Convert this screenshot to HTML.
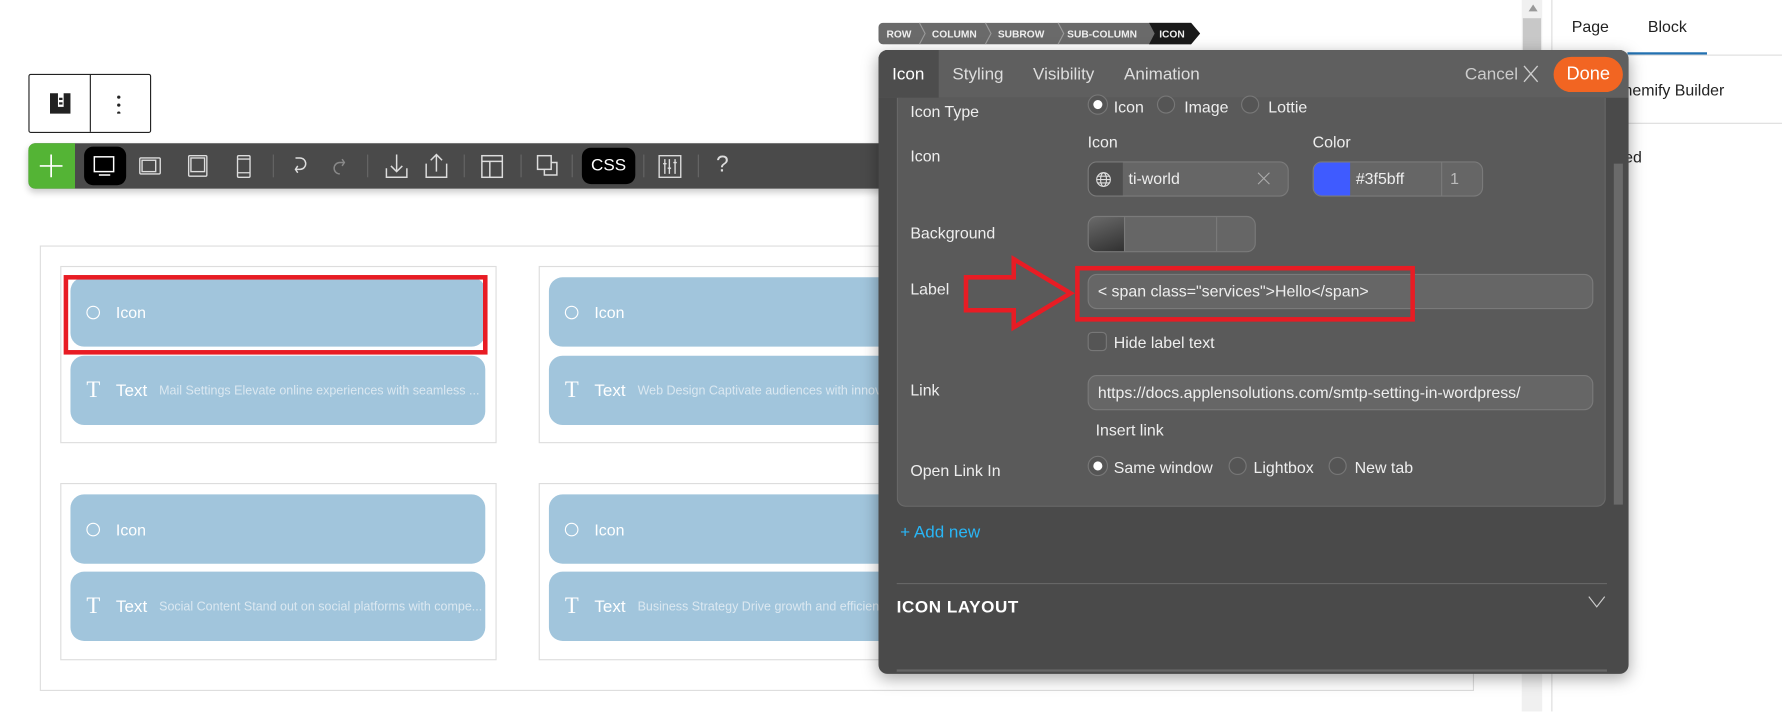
<!DOCTYPE html>
<html><head><meta charset="utf-8"><style>
*{box-sizing:border-box;margin:0;padding:0}
html,body{width:1782px;height:712px;overflow:hidden;background:#fff;font-family:"Liberation Sans",Arial,sans-serif}
#w{position:absolute;left:0;top:0;width:1568px;height:626px;transform:scale(1.13648);transform-origin:0 0}
.a{position:absolute}
.t{color:#eee;font-size:14px;white-space:nowrap}
.blk{position:absolute;background:#a1c5dc;border-radius:12px;color:#fff;font-size:14px}
.blk span{position:absolute;top:50%;transform:translateY(-50%);white-space:nowrap}
.radio{position:absolute;width:16px;height:16px;border-radius:50%;border:1px solid #777;background:#555}
.radio.on{background:#fff;border:4px solid #555;box-shadow:0 0 0 1px #777}
.inp{position:absolute;border:1px solid #7a7a7a;border-radius:8px;background:#666}
.sep{position:absolute;top:136px;width:1px;height:20px;background:#666}
</style></head><body><div id="w">

<div class="a" style="left:25px;top:65px;width:108px;height:52px;border:1px solid #222;border-radius:2px"></div>
<div class="a" style="left:79px;top:66px;width:1px;height:50px;background:#222"></div>
<svg class="a" style="left:43px;top:81px" width="20" height="20" viewBox="0 0 20 20"><path d="M1 1h7v12h5V1h6v18H1z" fill="#222"/><rect x="9" y="5" width="3" height="2" fill="#222"/><rect x="9" y="9" width="3" height="2" fill="#222"/></svg>
<div class="a" style="left:103px;top:82px;width:3px;height:18px;background:radial-gradient(circle,#222 1.3px,transparent 1.6px) 0 0/3px 7px"></div>

<div class="a" style="left:25px;top:126px;width:780px;height:40px;background:#4a4a4a;border-radius:6px 0 0 6px;box-shadow:0 3px 6px rgba(0,0,0,.2)"></div>
<div class="a" style="left:25px;top:126px;width:41px;height:40px;background:#54b435;border-radius:6px 0 0 6px"></div>
<svg class="a" style="left:34px;top:135px" width="22" height="22"><path d="M11 1v20M1 11h20" stroke="#fff" stroke-width="1.5"/></svg>
<div class="a" style="left:74px;top:129px;width:37px;height:34px;background:#000;border-radius:8px"></div>
<svg class="a" style="left:80px;top:134px" width="24" height="24" fill="none" stroke="#fff" stroke-width="1.3"><rect x="3" y="4" width="17" height="13"/><path d="M7 20h10"/></svg>
<svg class="a" style="left:120px;top:134px" width="24" height="24" fill="none" stroke="#ddd" stroke-width="1.2"><rect x="3" y="5" width="18" height="14" rx="1"/><rect x="5" y="7" width="12" height="10"/></svg>
<svg class="a" style="left:162px;top:134px" width="24" height="24" fill="none" stroke="#ddd" stroke-width="1.2"><rect x="4" y="3" width="16" height="18" rx="1"/><rect x="6" y="5" width="12" height="12"/></svg>
<svg class="a" style="left:202px;top:134px" width="24" height="24" fill="none" stroke="#ddd" stroke-width="1.2"><rect x="7" y="3" width="11" height="19" rx="1"/><path d="M7 6h11M7 18h11"/></svg>
<div class="sep" style="left:240px"></div>
<svg class="a" style="left:252px;top:134px" width="24" height="24" fill="none" stroke="#ddd" stroke-width="1.3"><path d="M8 5h4a5 5 0 0 1 0 10H8M10 12l-2 3 2 3"/></svg>
<svg class="a" style="left:287px;top:134px" width="24" height="24" fill="none" stroke="#888" stroke-width="1.3"><path d="M16 9h-4a5 5 0 0 0 0 10M14 6l2 3-2 3"/></svg>
<div class="sep" style="left:323px"></div>
<svg class="a" style="left:337px;top:133px" width="24" height="26" fill="none" stroke="#ddd" stroke-width="1.3"><path d="M12 3v15M7 13l5 5 5-5M3 15v8h18v-8"/></svg>
<svg class="a" style="left:372px;top:133px" width="24" height="26" fill="none" stroke="#ddd" stroke-width="1.3"><path d="M12 18V3M7 8l5-5 5 5M3 11v12h18V11"/></svg>
<div class="sep" style="left:408px"></div>
<svg class="a" style="left:421px;top:134px" width="24" height="24" fill="none" stroke="#ddd" stroke-width="1.3"><rect x="3" y="3" width="18" height="19"/><path d="M3 8h18M10 8v14"/></svg>
<div class="sep" style="left:458px"></div>
<svg class="a" style="left:470px;top:134px" width="24" height="24" fill="none" stroke="#ddd" stroke-width="1.3"><rect x="3" y="3" width="12" height="12"/><path d="M15 9h5v11H9v-5"/></svg>
<div class="sep" style="left:503px"></div>
<div class="a" style="left:512px;top:130px;width:47px;height:32px;background:#000;border-radius:8px;color:#fff;font-size:15px;text-align:center;line-height:32px">CSS</div>
<div class="sep" style="left:566px"></div>
<svg class="a" style="left:577px;top:134px" width="24" height="24" fill="none" stroke="#ddd" stroke-width="1.2"><rect x="3" y="3" width="19" height="19"/><path d="M8 6v13M12 6v13M17 6v13M6.5 10h3M10.5 14h3M15.5 9h3"/></svg>
<div class="sep" style="left:614px"></div>
<div class="a" style="left:630px;top:134px;color:#ddd;font-size:20px">?</div>

<div class="a" style="left:35px;top:216px;width:1262px;height:392px;border:1px solid #ddd"></div>
<div class="a" style="left:53px;top:234px;width:384px;height:156px;border:1px solid #ddd"></div>
<div class="a" style="left:474px;top:234px;width:384px;height:156px;border:1px solid #ddd"></div>
<div class="a" style="left:53px;top:425px;width:384px;height:156px;border:1px solid #ddd"></div>
<div class="a" style="left:474px;top:425px;width:384px;height:156px;border:1px solid #ddd"></div>

<div class="blk" style="left:62px;top:244px;width:365px;height:61px"><span style="left:14px;width:12px;height:12px;border:1.3px solid #fff;border-radius:50%"></span><span style="left:40px">Icon</span></div>
<div class="blk" style="left:62px;top:313px;width:365px;height:61px"><span style="left:14px;font-family:'Liberation Serif',serif;font-size:20px">T</span><span style="left:40px;font-size:15px">Text</span><span style="left:78px;font-size:11px;color:#dbe8f1">Mail Settings Elevate online experiences with seamless ...</span></div>
<div class="blk" style="left:483px;top:244px;width:365px;height:61px"><span style="left:14px;width:12px;height:12px;border:1.3px solid #fff;border-radius:50%"></span><span style="left:40px">Icon</span></div>
<div class="blk" style="left:483px;top:313px;width:365px;height:61px"><span style="left:14px;font-family:'Liberation Serif',serif;font-size:20px">T</span><span style="left:40px;font-size:15px">Text</span><span style="left:78px;font-size:11px;color:#dbe8f1">Web Design Captivate audiences with innovative</span></div>
<div class="blk" style="left:62px;top:435px;width:365px;height:61px"><span style="left:14px;width:12px;height:12px;border:1.3px solid #fff;border-radius:50%"></span><span style="left:40px">Icon</span></div>
<div class="blk" style="left:62px;top:503px;width:365px;height:61px"><span style="left:14px;font-family:'Liberation Serif',serif;font-size:20px">T</span><span style="left:40px;font-size:15px">Text</span><span style="left:78px;font-size:11px;color:#dbe8f1">Social Content Stand out on social platforms with compe...</span></div>
<div class="blk" style="left:483px;top:435px;width:365px;height:61px"><span style="left:14px;width:12px;height:12px;border:1.3px solid #fff;border-radius:50%"></span><span style="left:40px">Icon</span></div>
<div class="blk" style="left:483px;top:503px;width:365px;height:61px"><span style="left:14px;font-family:'Liberation Serif',serif;font-size:20px">T</span><span style="left:40px;font-size:15px">Text</span><span style="left:78px;font-size:11px;color:#dbe8f1">Business Strategy Drive growth and efficiency</span></div>
<div class="a" style="left:56px;top:242px;width:373px;height:70px;border:4px solid #e81c24"></div>

<div class="a" style="left:1339px;top:0;width:18px;height:626px;background:#f0f0f0"></div>
<div class="a" style="left:1340px;top:16px;width:16px;height:400px;background:#c8c8c8"></div>
<div class="a" style="left:1345px;top:4px;width:0;height:0;border:4px solid transparent;border-bottom:6px solid #999;border-top:0"></div>
<div class="a" style="left:1365px;top:0;width:203px;height:626px;border-left:1px solid #ddd;background:#fff"></div>
<div class="a" style="left:1383px;top:15px;font-size:14px;color:#222">Page</div>
<div class="a" style="left:1450px;top:15px;font-size:14px;color:#222">Block</div>
<div class="a" style="left:1366px;top:48px;width:202px;height:1px;background:#ddd"></div>
<div class="a" style="left:1432px;top:46px;width:70px;height:2px;background:#2271b1"></div>
<div class="a" style="left:1420px;top:71px;font-size:14px;color:#222">Themify Builder</div>
<div class="a" style="left:1366px;top:108px;width:202px;height:1px;background:#ddd"></div>
<div class="a" style="left:1405px;top:130px;font-size:14px;color:#222">Saved</div>

<svg class="a" style="left:773px;top:20px" width="285" height="19" font-family="Liberation Sans" font-size="9" font-weight="bold">
<path d="M4 0H275l8 9.5-8 9.5H4a4 4 0 0 1-4-4V4a4 4 0 0 1 4-4z" fill="#6a6a6a"/>
<path d="M238 0H275l8 9.5-8 9.5H238l5-9.5z" fill="#1a1a1a"/>
<path d="M36 0l5 9.5-5 9.5M94 0l5 9.5-5 9.5M158 0l5 9.5-5 9.5" stroke="#999" fill="none"/>
<text x="7" y="13" fill="#eee">ROW</text><text x="47" y="13" fill="#eee">COLUMN</text><text x="105" y="13" fill="#eee">SUBROW</text><text x="166" y="13" fill="#eee">SUB-COLUMN</text><text x="247" y="13" fill="#eee">ICON</text></svg>

<div class="a" style="left:773px;top:44px;width:660px;height:549px;background:#4a4a4a;border-radius:8px;box-shadow:0 4px 14px rgba(0,0,0,.35);overflow:hidden">
 <div class="a" style="left:0;top:0;width:660px;height:42px;background:#5f5f5f"></div>
 <div class="a" style="left:0;top:0;width:53px;height:42px;background:#4d4d4d"></div>
 <div class="a t" style="left:12px;top:13px;font-size:15px;color:#fff">Icon</div>
 <div class="a t" style="left:65px;top:13px;font-size:15px;color:#ddd">Styling</div>
 <div class="a t" style="left:136px;top:13px;font-size:15px;color:#ddd">Visibility</div>
 <div class="a t" style="left:216px;top:13px;font-size:15px;color:#ddd">Animation</div>
 <div class="a t" style="left:516px;top:13px;font-size:15px;color:#ccc">Cancel</div>
 <svg class="a" style="left:566px;top:12px" width="16" height="18"><path d="M2 2l12 14M14 2L2 16" stroke="#ccc" stroke-width="1.2"/></svg>
 <div class="a" style="left:594px;top:6px;width:61px;height:31px;background:#f26522;border-radius:16px;color:#fff;font-size:16px;text-align:center;line-height:31px">Done</div>
 <div class="a" style="left:16px;top:42px;width:624px;height:360px;background:#5a5a5a;border:1px solid #6a6a6a;border-top:0;border-radius:0 0 8px 8px"></div>
 <div class="a" style="left:647px;top:100px;width:8px;height:300px;background:#6a6a6a"></div>
</div>

<div class="a t" style="left:801px;top:90px">Icon Type</div>
<div class="radio on" style="left:958px;top:84px"></div><div class="a t" style="left:980px;top:86px">Icon</div>
<div class="radio" style="left:1018px;top:84px"></div><div class="a t" style="left:1042px;top:86px">Image</div>
<div class="radio" style="left:1092px;top:84px"></div><div class="a t" style="left:1116px;top:86px">Lottie</div>

<div class="a t" style="left:801px;top:129px">Icon</div>
<div class="a t" style="left:957px;top:117px">Icon</div>
<div class="a t" style="left:1155px;top:117px">Color</div>
<div class="inp" style="left:957px;top:142px;width:177px;height:31px;overflow:hidden"><div class="a" style="left:0;top:0;width:30px;height:31px;background:#4e4e4e"></div></div>
<svg class="a" style="left:963px;top:150px" width="16" height="16" fill="none" stroke="#ddd" stroke-width="1"><circle cx="8" cy="8" r="6"/><ellipse cx="8" cy="8" rx="2.6" ry="6"/><path d="M2 8h12M3 5h10M3 11h10"/></svg>
<div class="a t" style="left:993px;top:149px">ti-world</div>
<svg class="a" style="left:1105px;top:150px" width="14" height="14"><path d="M2 2l10 10M12 2L2 12" stroke="#aaa"/></svg>
<div class="inp" style="left:1155px;top:142px;width:150px;height:31px;overflow:hidden"><div class="a" style="left:0;top:0;width:32px;height:31px;background:#3f5bff"></div><div class="a" style="left:112px;top:0;width:1px;height:31px;background:#7a7a7a"></div></div>
<div class="a t" style="left:1193px;top:149px">#3f5bff</div>
<div class="a t" style="left:1276px;top:149px;color:#bbb">1</div>

<div class="a t" style="left:801px;top:197px">Background</div>
<div class="inp" style="left:957px;top:190px;width:148px;height:32px;overflow:hidden"><div class="a" style="left:0;top:0;width:31px;height:32px;background:linear-gradient(160deg,#6a6a6a,#2e2e2e)"></div><div class="a" style="left:31px;top:0;width:1px;height:32px;background:#7a7a7a"></div><div class="a" style="left:112px;top:0;width:1px;height:32px;background:#7a7a7a"></div></div>

<div class="a t" style="left:801px;top:246px">Label</div>
<div class="inp" style="left:957px;top:241px;width:445px;height:31px"></div>
<div class="a t" style="left:966px;top:248px">&lt; span class="services"&gt;Hello&lt;/span&gt;</div>
<div class="a" style="left:946px;top:234px;width:299px;height:49px;border:4px solid #e81c24"></div>
<svg class="a" style="left:845px;top:224px" width="104" height="70"><path d="M5 20H47V4L97 34 47 64V49H5z" fill="none" stroke="#e81c24" stroke-width="4"/></svg>

<div class="a" style="left:957px;top:292px;width:17px;height:17px;border:1px solid #777;border-radius:4px;background:#555"></div>
<div class="a t" style="left:980px;top:293px">Hide label text</div>

<div class="a t" style="left:801px;top:335px">Link</div>
<div class="inp" style="left:957px;top:330px;width:445px;height:31px"></div>
<div class="a t" style="left:966px;top:337px">https://docs.applensolutions.com/smtp-setting-in-wordpress/</div>
<div class="a t" style="left:964px;top:370px">Insert link</div>

<div class="a t" style="left:801px;top:406px">Open Link In</div>
<div class="radio on" style="left:958px;top:402px"></div><div class="a t" style="left:980px;top:403px">Same window</div>
<div class="radio" style="left:1081px;top:402px"></div><div class="a t" style="left:1103px;top:403px">Lightbox</div>
<div class="radio" style="left:1169px;top:402px"></div><div class="a t" style="left:1192px;top:403px">New tab</div>

<div class="a t" style="left:792px;top:460px;color:#29b6f6;font-size:15px">+ Add new</div>
<div class="a" style="left:789px;top:513px;width:625px;height:1px;background:#666"></div>
<div class="a t" style="left:789px;top:526px;font-weight:bold;font-size:15px;letter-spacing:.5px;color:#fff">ICON LAYOUT</div>
<svg class="a" style="left:1397px;top:524px" width="16" height="12"><path d="M1 1l7 9 7-9" stroke="#ccc" fill="none"/></svg>
<div class="a" style="left:789px;top:589px;width:625px;height:2px;background:#666"></div>

</div></body></html>
